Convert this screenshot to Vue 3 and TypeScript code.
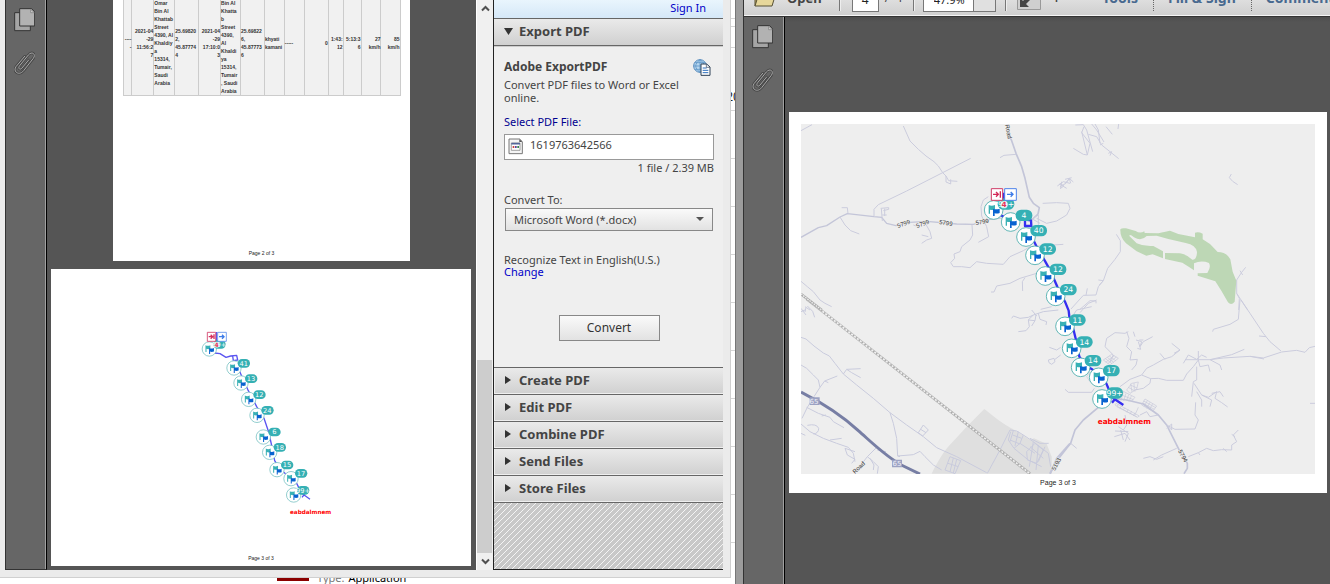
<script setup lang="ts">
import { ref } from 'vue'

interface Marker { x: number; y: number; bx: number; by: number; label: string }
interface Cell { width: number; text: string; align: 'left' | 'right' }

const cells: Cell[] = [
  { width: 9, text: '----\n-', align: 'right' },
  { width: 22, text: '2021-04\n-29\n11:56:2\n7', align: 'right' },
  { width: 21, text: 'Omar\nBin Al\nKhattab\nStreet\n4390, Al\nKhaldiy\na\n15314,\nTumair,\nSaudi\nArabia', align: 'left' },
  { width: 24, text: '25.69820\n2,\n45.87774\n4', align: 'left' },
  { width: 22, text: '2021-04\n-29\n17:10:0\n3', align: 'right' },
  { width: 20, text: 'Omar\nBin Al\nKhatta\nb\nStreet\n4390,\nAl\nKhaldi\nya\n15314,\nTumair\n, Saudi\nArabia', align: 'left' },
  { width: 24, text: '25.69822\n6,\n45.87773\n6', align: 'left' },
  { width: 20, text: 'khyati\nkamani', align: 'left' },
  { width: 20, text: '-----', align: 'left' },
  { width: 24, text: '0', align: 'right' },
  { width: 15, text: '1:43:\n12', align: 'right' },
  { width: 18, text: '5:13:3\n6', align: 'right' },
  { width: 20, text: '27\nkm/h', align: 'right' },
  { width: 19, text: '85\nkm/h', align: 'right' },
]
const totalWidth = cells.reduce((sum, c) => sum + c.width, 0)

const leftMarkers: Marker[] = [
  { x: 88, y: 117, bx: 118, by: 103, label: '99+' },
  { x: 162, y: 174, bx: 191, by: 160, label: '41' },
  { x: 183, y: 219, bx: 213, by: 206, label: '13' },
  { x: 206, y: 268, bx: 238, by: 254, label: '12' },
  { x: 231, y: 316, bx: 262, by: 301, label: '24' },
  { x: 250, y: 381, bx: 283, by: 366, label: '6' },
  { x: 269, y: 427, bx: 299, by: 412, label: '18' },
  { x: 291, y: 479, bx: 321, by: 465, label: '15' },
  { x: 333, y: 506, bx: 363, by: 490, label: '17' },
  { x: 341, y: 555, bx: 369, by: 541, label: '99+' },
]
const rightMarkers: Marker[] = [
  { x: 71, y: 90, bx: 108, by: 72, label: '99+' },
  { x: 122, y: 126, bx: 162, by: 106, label: '4' },
  { x: 168, y: 171, bx: 206, by: 152, label: '40' },
  { x: 195, y: 226, bx: 233, by: 207, label: '12' },
  { x: 226, y: 288, bx: 264, by: 268, label: '12' },
  { x: 257, y: 349, bx: 295, by: 329, label: '24' },
  { x: 285, y: 439, bx: 322, by: 420, label: '11' },
  { x: 305, y: 505, bx: 343, by: 486, label: '14' },
  { x: 332, y: 562, bx: 369, by: 542, label: '14' },
  { x: 386, y: 592, bx: 424, by: 572, label: '17' },
  { x: 396, y: 657, bx: 434, by: 639, label: '99+' },
]

const sections = ['Create PDF', 'Edit PDF', 'Combine PDF', 'Send Files', 'Store Files']
const format = ref('docx')
const pageNumber = ref('4')
const zoomLevel = ref('47.9%')
const gridRows = [19, 8, 21, 63, 48, 48, 48, 48, 48, 48, 48, 48, 48]
</script>

<template>
  <div class="desktop">
    <div class="left-side">
      <section class="window-left">
        <nav class="rail">
          <button class="rail-btn" aria-label="Page thumbnails">
            <svg width="21" height="24" viewBox="0 0 63 72">
              <path d="M2 14h47v54H2z" fill="#a5a5a5" stroke="#333" stroke-width="3" />
              <path d="M17 2h36l9 10v42H17z" fill="#b2b2b2" stroke="#333" stroke-width="3" />
              <path d="M50 4v10h11z" fill="#d2d2d2" stroke="#777" stroke-width="2" />
            </svg>
          </button>
          <button class="rail-btn" aria-label="Attachments">
            <svg width="21" height="24" viewBox="0 0 63 72" fill="none">
              <path d="M44 27L24 51C17 59 11 51 17 44L43 12C54-1 67 10 58 22L29 59C15 76-4 62 6 47L32 16" stroke="#484848" stroke-width="8" stroke-linecap="round" />
              <path d="M44 27L24 51C17 59 11 51 17 44L43 12C54-1 67 10 58 22L29 59C15 76-4 62 6 47L32 16" stroke="#a8a8a8" stroke-width="3" stroke-linecap="round" />
            </svg>
          </button>
        </nav>

        <main class="doc-left">
          <article class="page page-portrait">
            <table>
              <colgroup>
                <col v-for="(c, i) in cells" :key="i" :style="{ width: (c.width / totalWidth) * 100 + '%' }" />
              </colgroup>
              <tbody>
                <tr>
                  <td v-for="(c, i) in cells" :key="i" :class="c.align">{{ c.text }}</td>
                </tr>
              </tbody>
            </table>
            <footer>Page 2 of 3</footer>
          </article>
          <article class="page page-landscape">
            <svg class="track-map" viewBox="-387 -123 1260 840">
              <g fill="none" stroke="#5a54f0" stroke-width="4" stroke-linejoin="round">
                <path d="M110 66V95M104 129L120 131L138 142L152 138L170 136L173 150L160 152L158 138M176 178L184 196L203 238L230 290L252 325L266 366L274 402L284 452L300 478L325 498L350 520L365 550L390 568M366 562L374 552" />
              </g>
              <g v-for="(m, i) in leftMarkers" :key="i">
                <g :transform="`translate(${m.x} ${m.y}) scale(0.77)`">
                  <circle r="28" fill="#fff" stroke="#74bfc0" stroke-width="3" />
                  <path d="M-15 -15Q-6 -10 4 -15V-1Q-5 2 -11 -1V12H-15Z" fill="#39b1b5" />
                  <path d="M-1 -4Q8 1 18 -4V10Q8 13 3 10V19H-1Z" fill="#0863d0" />
                </g>
                <rect :x="m.bx - 18" :y="m.by - 13" width="37" height="26" rx="13" fill="#35b0b4" />
                <text :x="m.bx" :y="m.by + 7" class="count" font-size="20">{{ m.label }}</text>
              </g>
              <circle cx="110" cy="104" r="9" fill="#fff" fill-opacity=".75" />
              <text x="110" y="111" class="four" font-size="18">4</text>
              <g fill="#fff" stroke-width="2.5">
                <path d="M82 67h25v27h-25z" stroke="#d13c67" />
                <path d="M113 67h26v27h-26z" stroke="#5d8feb" />
              </g>
              <path d="M86 80h12m-6-6l6 6-6 6M102 73v14" fill="none" stroke="#d42f5e" stroke-width="4" />
              <path d="M117 80h15m-6-6l6 6-6 6" fill="none" stroke="#3c7be8" stroke-width="4" />
              <text x="330" y="613" class="place" font-size="17">eabdalmnem</text>
            </svg>
            <footer>Page 3 of 3</footer>
          </article>
        </main>

        <div class="scrollbar">
          <button aria-label="Scroll up"><svg width="9" height="7" viewBox="0 0 9 7"><path d="M1 5.5L4.500 2L8 5.500" /></svg></button>
          <div class="track"><div class="thumb"></div></div>
          <button aria-label="Scroll down"><svg width="9" height="7" viewBox="0 0 9 7"><path d="M1 1.500L4.500 5L8 1.500" /></svg></button>
        </div>

        <aside class="tools">
          <div class="signin"><a href="#">Sign In</a></div>
          <button class="section open">
            <svg width="9" height="7" viewBox="0 0 9 7"><path d="M0 0H9L4.500 7Z" /></svg>Export PDF
          </button>
          <div class="body">
            <div class="title">
              <h2>Adobe ExportPDF</h2>
              <svg width="18" height="17" viewBox="0 0 54 51">
                <circle cx="21" cy="21" r="19" fill="#b8d7ef" stroke="#5589bb" stroke-width="3" />
                <path d="M2 21h38M5 11h32M5 31h32M21 2v38M21 2C4 14 4 28 21 40M21 2C38 14 38 28 21 40" fill="none" stroke="#5e95c7" stroke-width="2.500" />
                <path d="M24 15h17l10 9v25H24z" fill="#fff" stroke="#2d4057" stroke-width="3" />
                <path d="M29 27h12M29 34h17M29 41h17" stroke="#2d6fbd" stroke-width="3" />
                <path d="M40 15v10h10" fill="none" stroke="#2d4057" stroke-width="2" />
              </svg>
            </div>
            <p class="intro">Convert PDF files to Word or Excel<br />online.</p>
            <label class="pick" for="pdf-file">Select PDF File:</label>
            <div class="file">
              <svg width="15" height="17" viewBox="0 0 45 51">
                <path d="M3 3h32l8 8v36H3z" fill="#f5f5f5" stroke="#777" stroke-width="3" />
                <path d="M34 3v9h9z" fill="#555" />
                <path d="M10 15h26v22H10z" fill="#fff" stroke="#777" stroke-width="2" />
                <path d="M10 17h26" stroke="#53659a" stroke-width="5" />
                <path d="M14 27h5" stroke="#cc4141" stroke-width="6" />
                <path d="M21 27h5" stroke="#54439f" stroke-width="6" />
                <path d="M28 27h5" stroke="#37864b" stroke-width="6" />
              </svg>
              <input id="pdf-file" type="text" value="1619763642566" />
            </div>
            <div class="size">1 file / 2.39 MB</div>
            <label class="to" for="format">Convert To:</label>
            <div class="select">
              <select id="format" v-model="format">
                <option value="docx">Microsoft Word (*.docx)</option>
                <option value="xlsx">Microsoft Excel (*.xlsx)</option>
              </select>
              <svg width="8" height="4" viewBox="0 0 8 4"><path d="M0 0H8L4 4Z" fill="#555" /></svg>
            </div>
            <div class="recognize">Recognize Text in English(U.S.)<br /><a href="#">Change</a></div>
            <button class="convert">Convert</button>
          </div>
          <button v-for="s in sections" :key="s" class="section">
            <svg width="9" height="8" viewBox="0 0 9 8"><path d="M1 0L7 4L1 8Z" /></svg>{{ s }}
          </button>
          <div class="hatch">
            <svg width="100%" height="100%">
              <defs>
                <pattern id="stripes" width="6" height="6" patternUnits="userSpaceOnUse">
                  <path d="M0 0h6v6H0z" fill="#c8c8c8" />
                  <path d="M-1 1L1 -1M0 6L6 0M5 7L7 5" stroke="#f4f4f4" />
                </pattern>
              </defs>
              <rect width="100%" height="100%" fill="url(#stripes)" />
            </svg>
          </div>
        </aside>
      </section>
      <div class="behind">
        <span class="red-mark"></span><span class="type">Type:</span><span>Application</span>
      </div>
    </div>

    <div class="gutter">
      <div v-for="(h, i) in gridRows" :key="i" class="grid-row" :style="{ height: h + 'px' }">{{ i === 3 ? '20' : '' }}</div>
    </div>

    <section class="window-right">
      <header class="toolbar">
        <button class="open-btn">
          <svg width="24" height="20" viewBox="0 0 24 20"><path d="M2 19V3h7l2 2h10v3" fill="#c8b36b" stroke="#575034" /><path d="M2 19L6 6h17l-4 13z" fill="#e6d79b" stroke="#575034" /></svg>
          <span>Open</span>
        </button>
        <i class="sep"></i>
        <input v-model="pageNumber" class="page-input" aria-label="Page number" />
        <span class="total">/ &nbsp;4</span>
        <i class="sep"></i>
        <div class="zoom">
          <input v-model="zoomLevel" aria-label="Zoom" />
          <button aria-label="Zoom levels"></button>
        </div>
        <i class="sep"></i>
        <button class="fit" aria-label="Full screen"><svg width="24" height="22" viewBox="0 0 24 22"><path d="M.5 0v21.500h23V0" fill="#cfcfcf" stroke="#999" /><path d="M3 19V10l3 3 4-4 3 3-4 4 3 3z" fill="#444" /></svg></button>
        <span class="plus">+</span>
        <button class="menu tools-menu">Tools</button>
        <i class="dots"></i>
        <button class="menu">Fill &amp; Sign</button>
        <i class="dots"></i>
        <button class="menu">Comment</button>
      </header>
      <div class="right-body">
        <nav class="rail">
          <button class="rail-btn" aria-label="Page thumbnails">
            <svg width="21" height="24" viewBox="0 0 63 72">
              <path d="M2 14h47v54H2z" fill="#a5a5a5" stroke="#333" stroke-width="3" />
              <path d="M17 2h36l9 10v42H17z" fill="#b2b2b2" stroke="#333" stroke-width="3" />
              <path d="M50 4v10h11z" fill="#d2d2d2" stroke="#777" stroke-width="2" />
            </svg>
          </button>
          <button class="rail-btn" aria-label="Attachments">
            <svg width="21" height="24" viewBox="0 0 63 72" fill="none">
              <path d="M44 27L24 51C17 59 11 51 17 44L43 12C54-1 67 10 58 22L29 59C15 76-4 62 6 47L32 16" stroke="#484848" stroke-width="8" stroke-linecap="round" />
              <path d="M44 27L24 51C17 59 11 51 17 44L43 12C54-1 67 10 58 22L29 59C15 76-4 62 6 47L32 16" stroke="#a8a8a8" stroke-width="3" stroke-linecap="round" />
            </svg>
          </button>
        </nav>
        <main class="doc-right">
          <article class="page page-map">
            <svg class="street-map" viewBox="801 124 514 350">
              <path d="M801 124h514v350H801z" fill="#eeeeee" />
              <!-- urban area, minor roads and highway, south-west -->
              <g transform="translate(790 300) scale(.33333)" fill="none" stroke="#c9cbdd" stroke-width="3" stroke-linejoin="round">
                <path d="M425 521C440 490 460 455 480 434L530 380L583 327C620 357 645 375 667 386L720 420L732 415L770 432L785 470V521Z" fill="#dfdfdf" stroke="none" />
                <path d="M33 112L48 117L72 138L100 159L118 168L135 190L160 222L200 255L250 295L300 338L350 375L400 410L440 443L500 470L590 518" />
                <path d="M160 222L170 208L212 206M170 208L185 218L212 233M33 195L50 205L70 225L85 240L90 262M142 228L104 243L90 262L72 290L52 322L36 355M104 243L115 248" />
                <path d="M300 338L310 370L320 415L323 468L370 464L390 454L405 470L430 495L455 510M323 468L330 470M385 398L400 375L415 390L398 408ZM392 388L408 398" />
                <path d="M50 322L85 340L120 352L130 365L162 383M95 348L108 345M33 372L60 395L100 415L140 430L175 442L190 460L195 485M120 420L155 415M52 376Q80 370 86 385Q86 400 70 402M33 400L46 406M195 455L165 445L172 465L195 478L185 490M262 440L232 470L215 492M232 470L250 485L265 500L262 521M262 450L288 455M240 475L252 495L250 510" />
                <path d="M33 25L48 45M33 35L45 30M52 18L68 34L74 52M48 22L45 36" />
                <path d="M480 470L465 510L495 521L512 482ZM474 490L505 500M490 474L480 516M500 478L490 519" />
                <path d="M592 520L630 450L660 390L680 393L700 405L690 430L672 445L655 420L662 395M668 405L695 415M660 420L690 432M670 392L660 425M685 395L675 438M700 405L730 425L775 460L782 500M710 455L735 430L760 450L740 490L712 480ZM720 440L760 475M730 425L718 500M745 435L738 510M765 440L745 485M690 430L735 460M672 445L715 480L755 500M720 415L750 430L776 430" />
                <path d="M665 55L670 48L690 55L715 52L730 45L760 35L805 30M730 45L715 60L718 80L708 92L685 95M715 60L735 62L725 78M745 40L750 58L770 65L768 75M735 62L738 45M778 142L800 150L812 142M775 180L792 175L795 185L785 193L777 188ZM795 178L812 165M725 30L740 48" />
                <path d="M780 521L800 475L840 430" stroke="#c4c6da" stroke-width="5" />
                <path d="M50 -3L720 521" stroke="#a9a9a9" stroke-width="8" />
                <path d="M50 -3L720 521" stroke="#f1f1f1" stroke-width="5" />
                <path d="M50 -3L720 521" stroke="#aaa" stroke-width="5" stroke-dasharray="5 6" />
                <path d="M33 276C100 310 155 345 205 392C245 427 292 474 340 498L390 522" stroke="#777ea4" stroke-width="9" />
                <path d="M59 292h30v23H59zM306 479h30v23h-30z" fill="#9ca2c3" stroke="none" />
              </g>
              <!-- roads, north-west -->
              <g transform="translate(790 110) scale(.33333)" fill="none" stroke="#cbccdd" stroke-width="3" stroke-linejoin="round">
                <path d="M33 62L66 44M340 48L352 75L360 93L385 118L408 138L432 155L445 168L458 188L468 198L476 212L502 214M468 198L468 216L482 222L482 208M542 145L458 188L350 243L265 284L252 298L252 318" />
                <path d="M33 382L85 353L110 347L150 321L172 311L252 320L275 322L290 340L318 347L360 337L410 334L500 342L550 343L600 328L650 322" stroke="#c3c5d8" stroke-width="4" />
                <path d="M155 293H172L174 310M150 321L165 345L182 362L208 372M272 295L296 293V298L280 302M274 296L277 333M284 296V318M277 315H290M405 338L420 365L425 385L410 390L395 400M395 375L415 380M370 345L390 352" />
                <path d="M652 42L657 75L665 92L678 130L695 170L705 205L718 262L730 280L748 293L744 312L725 330" stroke="#c3c5d8" stroke-width="5" />
                <path d="M678 133L642 136L630 143M595 260L580 270L573 290L575 318L590 350L596 380L565 397M546 345L548 375L540 390L515 410L510 425L492 432L494 445L482 458L490 470L515 470L540 473L560 455L590 460L640 463L660 440L700 422L720 410M720 410L820 403M603 546L612 546L620 528L660 520L690 505L740 490M705 503L697 515L698 543M758 280L800 278L835 280L840 295L830 315L800 333L770 340L740 325M720 330L745 315L745 348L720 350M715 320L750 340M33 514L52 530L70 545L90 570L105 580L125 590M802 228L820 215L840 220M808 222L830 235M815 215L812 235M840 205L825 220M752 598L785 590M775 470L805 468M45 590L60 600" />
                <path d="M33 552L95 600" stroke="#aaa" stroke-width="8" />
                <path d="M33 552L95 600" stroke="#eee" stroke-width="4" stroke-dasharray="5 3" />
              </g>
              <!-- park and roads, north-east -->
              <g transform="translate(1060 110) scale(.33333)" fill="none" stroke="#cccdde" stroke-width="3" stroke-linejoin="round">
                <path d="M46 45L70 44L80 60L98 125M65 65L82 135L70 133L40 115M72 50L65 68L90 100L82 135M85 73L110 80L125 105L150 125L176 146M95 42L110 60L132 96M105 42L115 60L120 100M176 42L174 57M138 50L157 73M145 130L155 125L150 137M120 105L130 100M514 192L508 203L518 214L533 224" />
                <path d="M0 230L18 220L28 205L40 216M15 208L35 203M28 205L32 220M0 220L12 228L0 236M169 373L181 392L181 425L165 448L143 475L130 512L115 530L108 555L70 556L33 597M115 510L130 512L118 525M82 535L78 556M60 598L90 572L108 573V580M530 510L545 487L557 472M540 482L548 495M530 510L530 550L563 600M530 550L538 565L536 600" />
                <path fill-rule="evenodd" fill="#bdd7b5" stroke="none" d="M181 358Q185 353 198 355L227 363Q240 372 253 364L254 369L295 370L330 362L355 372L405 382V368Q415 364 428 371V388L450 402L473 426Q500 426 511 448L518 485L529 512L524 575Q514 588 504 577L484 542L466 514L413 497V490L442 489Q454 472 447 459Q424 450 402 460V481L386 470L367 458L315 447V429L360 430Q382 434 397 449Q410 451 411 426Q408 405 377 399L325 387L290 377L260 378Q244 395 222 382Q208 370 208 378L230 400Q251 410 280 408L309 424V445L278 433L259 437L230 424L198 400Q180 382 181 358Z" />
              </g>
              <!-- town network, south-east -->
              <g transform="translate(1050 300) scale(.33333)" fill="none" stroke="#cbccdd" stroke-width="3" stroke-linejoin="round">
                <path d="M0 521L30 470L62 430L75 390L100 360L145 322M195 295L230 300L280 312L325 345L350 375L375 425L390 455L412 490V505L402 521" stroke="#c2c4d8" stroke-width="5" />
                <path d="M62 430L80 445M45 268L55 277L125 277L133 265M488 95L490 88L540 73L565 58L570 0M573 0L600 40L640 100L660 125L693 153M627 108L648 110M405 179H480L545 164L583 148M480 179L520 174L600 169L640 174L695 156L740 151L765 157L778 143L795 139M600 169L642 177M780 310H795M445 153V180L430 200L410 222L400 241H350L325 235L302 236M415 165L440 178L455 165L470 172M445 180L450 200L475 195L480 215M480 179L510 195L515 210M440 200L440 240L430 245L425 290M432 250L455 285L475 292L500 275M455 285L485 300L480 320M500 275L495 295L515 308L533 321M485 280L510 275L520 290M440 275L455 300L455 320M415 165L400 190M390 150L365 170L340 178L310 195L290 205L275 225L240 238L210 260M330 160L345 178M365 130L390 150L372 160M302 236L300 250L280 265L255 270M275 225L302 236M235 95L225 100L195 98L170 115L165 140L190 165L180 185M230 95L237 115L230 140L245 155L240 180L262 178L258 195L245 210M258 120L275 125L270 140L280 125L308 110M265 125L272 148L262 145M268 120H280M250 95L255 110M350 375L365 390V372L350 385M350 375L375 388L435 387L445 360L435 345L437 307M325 345L300 350L290 335L270 345M225 345L230 375L220 390L205 380M193 410L225 400L240 420M220 390L235 400L225 425M195 393L235 395M212 390L220 420M280 475L300 470L320 478L340 470M310 480L335 465L380 445M415 470L445 458L470 445L490 452L515 449L545 450V435L560 425L550 405L565 390M445 458L450 465M520 445L530 455M555 410L545 403M90 38L115 10L140 0M70 45L80 30L125 20" />
                <g stroke="#c5c7d9" stroke-width="2">
                  <path d="M160 180L185 163L205 175L180 195ZM166 176L186 191M172 172L192 188M178 168L198 183M167 187L193 167M173 191L199 171M200 298L212 270L255 292L245 303M207 282L250 299M212 273L205 300M220 276L213 302M228 280L221 303M236 284L229 303M244 288L237 305M230 270L245 250L265 246L260 268L240 280ZM235 262L256 274M241 255L261 264M242 251L246 276M252 249L253 271M275 315L285 297L320 318L308 334ZM278 309L313 328M281 303L317 323M292 302L282 320M300 307L290 325M308 311L298 330M198 310L268 348L262 352L195 315ZM205 313L202 318M215 318L210 325M225 323L219 330M235 328L230 337M245 333L240 343M255 338L250 348M265 322L255 345M200 320L260 350M120 215L110 230L120 245" />
                </g>
              </g>
              <g class="road-label">
                <text transform="translate(898 228) rotate(-20)">5799</text>
                <text transform="translate(917 228) rotate(-20)">5799</text>
                <text transform="translate(939 224) rotate(8)">5799</text>
                <text transform="translate(976 225) rotate(-10)">5799</text>
                <text transform="translate(1005 125) rotate(78)">Road</text>
                <text transform="translate(855 474) rotate(-44)">Road</text>
                <text transform="translate(1055 471) rotate(-62)">5193</text>
                <text transform="translate(1178 451) rotate(62)">5794</text>
              </g>
              <text x="814" y="404" class="shield">65</text>
              <text x="897" y="466" class="shield">65</text>
              <!-- vehicle track with stop markers -->
              <g transform="translate(970 180) scale(.33333)">
                <path d="M101 38V60L96 75M88 104L110 114L145 126M164 119L183 121L184 138H165V119M190 180L200 200L226 245L240 270L262 320L285 365L296 392L298 410L312 455L318 480L328 530L345 555L366 568L400 590L415 625L430 655L460 675M426 668L436 656" fill="none" stroke="#352ef0" stroke-width="7" stroke-linejoin="round" />
                <g v-for="(m, i) in rightMarkers" :key="i">
                  <g :transform="`translate(${m.x} ${m.y})`">
                    <circle r="28" fill="#fff" stroke="#44a9aa" stroke-width="2.500" />
                    <path d="M-15 -15Q-6 -11 4 -15V-1Q-5 1 -11 -1V11H-15Z" fill="#39b1b5" />
                    <path d="M-2 -4Q8 0 18 -4V9Q8 12 3 9V18H-2Z" fill="#0863d0" />
                  </g>
                  <rect :x="m.bx - 25" :y="m.by - 17" width="50" height="34" rx="16" fill="#35b0b4" />
                  <text :x="m.bx" :y="m.by + 8" class="count" font-size="23">{{ m.label }}</text>
                </g>
                <circle cx="102" cy="74" r="11" fill="#fff" fill-opacity=".8" />
                <text x="102" y="82" class="four" font-size="22">4</text>
                <g fill="#fff" stroke-width="3">
                  <path d="M64 26h34v35H64z" stroke="#cf3b66" />
                  <path d="M104 26h35v35h-35z" stroke="#4d83ea" />
                </g>
                <path d="M69 43h16m-7-7l7 7-7 7M91 34v19" fill="none" stroke="#d32857" stroke-width="4" />
                <path d="M111 43h18m-7-7l7 7-7 7" fill="none" stroke="#3c7be8" stroke-width="4" />
                <text x="383" y="731" class="place" font-size="22">eabdalmnem</text>
              </g>
            </svg>
            <footer>Page 3 of 3</footer>
          </article>
        </main>
      </div>
    </section>
  </div>
</template>

<style>
body { margin: 0; overflow: hidden; }
</style>

<style scoped>
* { box-sizing: border-box; }
button { font: inherit; color: inherit; border: 0; background: none; padding: 0; margin: 0; }
input, select { font: inherit; color: inherit; margin: 0; min-width: 0; }
a { color: #0000c8; text-decoration: none; }
svg { display: block; flex: none; }

.desktop {
  display: grid;
  grid-template-columns: 731fr 5px 594fr;
  height: 100vh;
  overflow: hidden;
  background: #fff;
  color: #444;
  font-family: "Noto Sans", "Open Sans", sans-serif;
  font-size: 12px;
}
.left-side { display: flex; flex-direction: column; min-width: 0; min-height: 0; }
.window-left {
  flex: 1;
  min-height: 0;
  display: flex;
  padding: 0 7px 7px 5px;
  background: #ebebeb;
  border-right: 1px solid #cfcfcf;
  border-bottom: 1px solid #d0d0d0;
}
.rail {
  flex: none;
  width: 42px;
  display: flex;
  flex-direction: column;
  align-items: flex-start;
  gap: 19px;
  padding: 8px 0 0 8px;
  background: #666;
  border-left: 1px solid #333;
  border-right: 1px solid #000;
  box-shadow: inset -1px 0 #a0a0a0;
}
.window-left .rail { border-bottom: 1px solid #333; }
.doc-left {
  flex: 1;
  min-width: 0;
  display: flex;
  flex-direction: column;
  align-items: center;
  justify-content: flex-end;
  gap: 8px;
  padding: 0 5px 4px 4px;
  overflow: hidden;
  background: #555;
}
.page { flex: none; display: flex; flex-direction: column; background: #fff; }
.page footer { text-align: center; font-family: "Liberation Sans", Arial, sans-serif; color: #222; }
.page-portrait { width: 297px; height: 271px; padding: 0 9px 0 10px; }
.page-portrait footer { margin-top: auto; }
.page-landscape { width: 100%; }
.page-portrait footer, .page-landscape footer { font-size: 5px; line-height: 15px; padding-top: 2px; }
.track-map, .street-map { width: 100%; height: auto; }

table {
  width: 100%;
  table-layout: fixed;
  border-collapse: collapse;
  background: #f1f1f1;
  font: bold 5px/8px "Liberation Sans", Arial, sans-serif;
  color: #333;
}
td { padding: 0; border: 1px solid #ccc; white-space: pre; vertical-align: middle; }
.right { text-align: right; }
.left { text-align: left; }

.scrollbar { flex: none; width: 17px; display: flex; flex-direction: column; background: #f0f0f0; border-left: 1px solid #fff; }
.scrollbar button { height: 17px; display: grid; place-items: center; }
.scrollbar path { fill: none; stroke: #505050; stroke-width: 2; }
.track { flex: 1; display: flex; flex-direction: column; justify-content: flex-end; }
.thumb { height: 36%; background: #cdcdcd; margin-right: 1px; }

.tools {
  flex: none;
  width: 230px;
  display: flex;
  flex-direction: column;
  background: #efefef;
  border-left: 1px solid #222;
  border-bottom: 1px solid #222;
}
.signin {
  height: 19px;
  padding-right: 17px;
  text-align: right;
  font-size: 11px;
  line-height: 16px;
  background: linear-gradient(#e9f5fd, #d5e8f8);
  border-bottom: 1px solid #666;
}
.section {
  display: flex;
  align-items: center;
  gap: 6px;
  height: 27px;
  padding: 0 0 2px 10px;
  border-top: 1px solid #666;
  background: linear-gradient(#eaeaea, #d0d0d0);
  box-shadow: inset 1px -1px #efefef;
  font-weight: bold;
  font-size: 13px;
  line-height: 18px;
}
.section.open { border-top: 0; border-bottom: 1px solid #666; box-shadow: 0 1px #ccc; }
.section path { fill: #333; }
.body { display: flex; flex-direction: column; padding: 13px 9px 26px 10px; line-height: 16px; font-size: 11px; }
.title { display: flex; justify-content: space-between; height: 16px; padding-right: 3px; }
h2 { margin: 0; font-size: 12px; line-height: 16px; }
.intro { margin: 3px 0 10px; line-height: 13px; }
.pick { color: #00008f; }
.file {
  display: flex;
  align-items: center;
  gap: 7px;
  height: 26px;
  margin-top: 4px;
  padding: 0 0 2px 3px;
  background: #fff;
  border: 1px solid #999;
}
.file input { flex: 1; height: 16px; border: 0; padding: 0 0 2px; background: none; outline: 0; }
.size { text-align: right; }
.to { margin-top: 16px; }
.select { position: relative; margin: 0 1px; }
.select select {
  display: block;
  width: 100%;
  height: 23px;
  padding: 0 8px;
  appearance: none;
  border: 1px solid #888;
  border-radius: 0;
  background: linear-gradient(#fafafa, #e2e2e2);
}
.select svg { position: absolute; right: 9px; top: 9px; pointer-events: none; }
.recognize { margin-top: 23px; line-height: 12px; }
.convert {
  align-self: center;
  width: 101px;
  height: 26px;
  margin-top: 37px;
  border: 1px solid #888;
  background: linear-gradient(#fafafa, #e2e2e2);
  color: #333;
  font-size: 12px;
}
.hatch { flex: 1; min-height: 0; border-top: 1px solid #666; }

.behind {
  flex: none;
  height: 6px;
  padding-left: 277px;
  display: flex;
  align-items: flex-end;
  overflow: hidden;
  line-height: 12px;
  font-size: 11px;
  color: #000;
}
.red-mark { width: 32px; height: 3px; margin-right: 8px; align-self: flex-start; background: #8b0000; }
.type { margin-right: 4px; color: #777; }

.gutter { overflow: hidden; background: #fff; border-right: 1px solid #777; }
.grid-row {
  display: flex;
  justify-content: center;
  align-items: flex-end;
  padding-bottom: 5px;
  line-height: 16px;
  border-bottom: 1px solid #d5d5d5;
  color: #222;
}
.grid-row:nth-child(2) { padding: 0; }

.window-right { display: flex; flex-direction: column; min-width: 0; min-height: 0; border-left: 7px solid #9c9c9c; }
.toolbar {
  flex: none;
  height: 17px;
  display: flex;
  align-items: flex-end;
  overflow: hidden;
  background: linear-gradient(#dedede, #cecece);
  border-bottom: 1px solid #333;
  border-left: 1px solid #333;
  box-shadow: inset 0 -1px #f5f5f5;
  font-weight: bold;
  font-size: 13px;
  line-height: 18px;
  white-space: nowrap;
}
.toolbar > * { flex: none; }
.open-btn { display: flex; align-items: flex-end; gap: 10px; margin-left: 9px; padding-bottom: 9px; }
.sep { width: 2px; height: 28px; margin-bottom: 5px; border-left: 1px solid #777; border-right: 1px solid #eee; }
.open-btn + .sep { margin-left: 17px; }
.page-input { width: 27px; height: 25px; margin: 0 6px 4px 11px; padding: 0; text-align: center; border: 1px solid #777; background: #fff; font-size: 12px; font-weight: normal; color: #222; }
.total { width: 28px; padding-bottom: 9px; font-weight: normal; font-size: 12px; }
.zoom { display: flex; margin: 0 9px 4px 8px; height: 25px; border: 1px solid #777; background: #fff; }
.zoom input { width: 49px; border: 0; padding: 0 0 0 10px; font-size: 11px; font-weight: normal; background: none; color: #222; }
.zoom button { width: 22px; border-left: 1px solid #777; background: #e0e0e0; }
.fit { margin: 0 0 6px 10px; }
.plus { margin-left: 12px; padding-bottom: 9px; }
.menu { padding: 0 15px 9px 14px; color: #48698f; font-size: 14px; }
.tools-menu { margin-left: 28px; }
.dots { height: 28px; margin-bottom: 5px; border-left: 1px dotted #666; }

.right-body { flex: 1; min-height: 0; display: flex; }
.doc-right {
  flex: 1;
  min-width: 0;
  display: flex;
  flex-direction: column;
  justify-content: center;
  padding: 4px 3px 0 4px;
  background: linear-gradient(#4c4c4c, #555 5px);
}
.page-map { padding: 12px 12px 2px; }
.page-map footer { font-size: 7px; line-height: 17px; }

.count { fill: #fff; text-anchor: middle; font-family: "DejaVu Sans", sans-serif; }
.four { fill: #e83055; text-anchor: middle; font-family: "DejaVu Sans", sans-serif; font-weight: bold; }
.place { fill: #f00; font-family: "DejaVu Sans", sans-serif; font-weight: bold; }
.road-label { fill: #333; font-family: "Liberation Sans", sans-serif; font-size: 6px; stroke: #eee; stroke-width: 1px; paint-order: stroke; }
.shield { fill: #f0f1f8; text-anchor: middle; font-family: "DejaVu Sans", sans-serif; font-size: 7px; }
</style>
